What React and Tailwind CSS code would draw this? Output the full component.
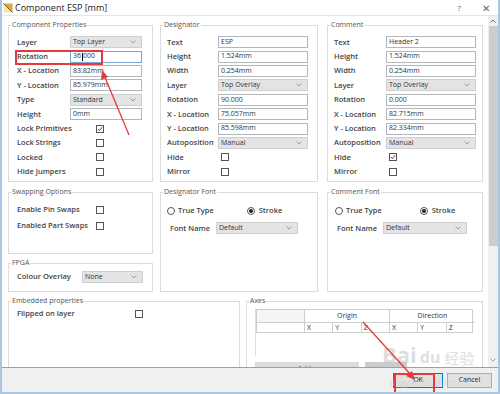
import React from "react";

const FONT = { fontFamily: '"Open Sans", "Noto Sans", "Liberation Sans", sans-serif' };

function Group({ title, className = "", children }) {
  return (
    <div className={`relative border border-[#dcdcdc] ${className}`}>
      <span className="absolute -top-[6px] left-[2px] bg-white px-[1px] text-[7px] leading-[10px] text-[#555]">
        {title}
      </span>
      {children}
    </div>
  );
}

function Chevron() {
  return (
    <svg width="6" height="4" viewBox="0 0 6 4" className="shrink-0">
      <polyline points="0.5,0.5 3,3 5.5,0.5" fill="none" stroke="#888" strokeWidth="0.8" />
    </svg>
  );
}

function TextBox({ value, w }) {
  return (
    <div className={`flex h-[12px] items-center border border-[#b4b6bc] bg-white pl-[2px] text-[7px] text-[#333] ${w}`}>
      {value}
    </div>
  );
}

function Select({ value, w }) {
  return (
    <div className={`flex h-[12px] items-center justify-between border border-[#cfcfcf] bg-[#e4e4e4] pl-[2px] pr-[5px] text-[7px] text-[#333] ${w}`}>
      <span>{value}</span>
      <Chevron />
    </div>
  );
}

function Check({ checked, ml }) {
  return (
    <div className={`flex h-[8px] w-[8px] items-center justify-center border border-[#555] bg-white ${ml}`}>
      {checked && (
        <svg width="6" height="6" viewBox="0 0 6 6">
          <polyline points="0.8,3 2.4,4.6 5.3,1.2" fill="none" stroke="#333" strokeWidth="0.9" />
        </svg>
      )}
    </div>
  );
}

function Radio({ on }) {
  return (
    <div className="flex h-[8px] w-[8px] items-center justify-center rounded-full border border-[#555] bg-white">
      {on && <div className="h-[4px] w-[4px] rounded-full bg-[#222]" />}
    </div>
  );
}

function Row({ label, lw, h = "h-[14.4px]", children }) {
  return (
    <div className={`flex items-center ${h}`}>
      <span className={`shrink-0 text-[7.5px] font-semibold text-[#444] ${lw}`}>{label}</span>
      {children}
    </div>
  );
}

function TextProps({ lw, tw, vals, hide }) {
  return (
    <>
      <Row label="Text" lw={lw}><TextBox value={vals[0]} w={tw} /></Row>
      <Row label="Height" lw={lw}><TextBox value={vals[1]} w={tw} /></Row>
      <Row label="Width" lw={lw}><TextBox value={vals[2]} w={tw} /></Row>
      <Row label="Layer" lw={lw}><Select value="Top Overlay" w={tw} /></Row>
      <Row label="Rotation" lw={lw}><TextBox value={vals[3]} w={tw} /></Row>
      <Row label="X - Location" lw={lw}><TextBox value={vals[4]} w={tw} /></Row>
      <Row label="Y - Location" lw={lw}><TextBox value={vals[5]} w={tw} /></Row>
      <Row label="Autoposition" lw={lw}><Select value="Manual" w={tw} /></Row>
      <Row label="Hide" lw={lw}><Check checked={hide} ml="ml-[3px]" /></Row>
      <Row label="Mirror" lw={lw}><Check ml="ml-[3px]" /></Row>
    </>
  );
}

function FontGroup({ title, className, trueX, strokeX, nameL, nameLw, sw }) {
  return (
    <Group title={title} className={className}>
      <div className={`flex h-[16px] items-center pt-[1px] mt-[9px] ${trueX}`}>
        <Radio />
        <span className="ml-[3px] text-[7.5px] font-semibold text-[#444]">True Type</span>
        <div className={`flex items-center ${strokeX}`}>
          <Radio on />
          <span className="ml-[4px] text-[7.5px] font-semibold text-[#444]">Stroke</span>
        </div>
      </div>
      <div className={`mt-[3px] ${nameL}`}>
        <Row label="Font Name" lw={nameLw}><Select value="Default" w={sw} /></Row>
      </div>
    </Group>
  );
}

export default function App() {
  return (
    <div style={FONT} className="relative flex h-[394px] w-[500px] flex-col overflow-hidden border-x-2 border-b-2 border-[#a9c6e3] bg-white">
      {/* title bar */}
      <div className="flex h-[16px] shrink-0 items-center border-b border-[#e6e6e6] bg-white pl-[1px]">
        <svg width="10" height="10" viewBox="0 0 10 10" className="shrink-0">
          <polygon points="0.5,0.5 9.5,0.5 9.5,9.5" fill="#d9a93a" />
          <polygon points="0.5,0.5 9.5,9.5 0.5,9.5" fill="#f3e6b8" />
          <line x1="0.5" y1="0.5" x2="9.5" y2="9.5" stroke="#7a5a1e" strokeWidth="1" />
        </svg>
        <span className="ml-[2px] text-[9px] text-[#222]">Component ESP [mm]</span>
        <span className="ml-auto text-[8px] text-[#666]">?</span>
        <span className="ml-[21px] mr-[8px] text-[10px] leading-none text-[#666]">✕</span>
      </div>

      {/* body */}
      <div className="flex min-h-0 flex-1">
        <div className="min-w-0 flex-1 overflow-hidden pl-[6px] pt-[9px]">
          {/* row 1 */}
          <div className="flex">
            <Group title={<>Component <u className="no-underline">P</u>roperties</>} className="h-[157px] w-[145px] pl-[8px] pt-[9px]">
              <Row label="Layer" lw="w-[53px]"><Select value="Top Layer" w="w-[72px]" /></Row>
              <Row label="Rotation" lw="w-[53px]">
                <div className="flex h-[12px] w-[72px] items-center border border-[#7aa7d6] bg-white pl-[2px] text-[7px] text-[#333]">
                  36<span className="mx-[0.5px] inline-block h-[8px] w-[1px] bg-black" />000
                </div>
              </Row>
              <Row label="X - Location" lw="w-[53px]"><TextBox value="83.82mm" w="w-[72px]" /></Row>
              <Row label="Y - Location" lw="w-[53px]"><TextBox value="85.979mm" w="w-[72px]" /></Row>
              <Row label="Type" lw="w-[53px]"><Select value="Standard" w="w-[72px]" /></Row>
              <Row label="Height" lw="w-[53px]"><TextBox value="0mm" w="w-[72px]" /></Row>
              <Row label="Lock Primitives" lw="w-[79px]"><Check checked /></Row>
              <Row label="Lock Strings" lw="w-[79px]"><Check /></Row>
              <Row label="Locked" lw="w-[79px]"><Check /></Row>
              <Row label="Hide Jumpers" lw="w-[79px]"><Check /></Row>
            </Group>

            <Group title="Designator" className="ml-[7px] h-[157px] w-[158px] pl-[6px] pt-[9px]">
              <TextProps lw="w-[51px]" tw="w-[90px]" vals={["ESP", "1.524mm", "0.254mm", "90.000", "75.057mm", "85.598mm"]} />
            </Group>

            <Group title="Comment" className="ml-[9px] h-[157px] w-[156px] pl-[6px] pt-[9px]">
              <TextProps lw="w-[52px]" tw="w-[90px]" vals={["Header 2", "1.524mm", "0.254mm", "0.000", "82.715mm", "82.334mm"]} hide />
            </Group>
          </div>

          {/* row 2 */}
          <div className="mt-[10px] flex">
            <div className="flex w-[145px] flex-col">
              <Group title="Swapping Options" className="h-[62px] pl-[8px] pt-[9px]">
                <Row label="Enable Pin Swaps" lw="w-[79px]" h="h-[16px]"><Check /></Row>
                <Row label="Enabled Part Swaps" lw="w-[79px]" h="h-[16px]"><Check /></Row>
              </Group>
              <Group title="FPGA" className="mt-[9px] h-[29px] pl-[8px] pt-[6px]">
                <Row label="Colour Overlay" lw="w-[65px]" h="h-[14px]"><Select value="None" w="w-[61px]" /></Row>
              </Group>
            </div>

            <FontGroup
              title="Designator Font"
              className="ml-[7px] h-[100px] w-[158px]"
              trueX="pl-[6px]"
              strokeX="ml-[33px]"
              nameL="pl-[9px]"
              nameLw="w-[46px]"
              sw="w-[82px]"
            />
            <FontGroup
              title="Comment Font"
              className="ml-[9px] h-[100px] w-[156px]"
              trueX="pl-[7px]"
              strokeX="ml-[38px]"
              nameL="pl-[9px]"
              nameLw="w-[46px]"
              sw="w-[84px]"
            />
          </div>

          {/* row 3 */}
          <div className="mt-[9px] flex">
            <Group title="Embedded properties" className="h-[80px] w-[232px] pl-[8px] pt-[5px]">
              <Row label="Flipped on layer" lw="w-[118px]" h="h-[14px]"><Check /></Row>
            </Group>
            <Group title="Axes" className="ml-[6px] h-[80px] w-[237px] pl-[8px] pt-[7px]">
              <div className="w-[218px] border-l border-[#dcdcdc]">
                <div className="grid grid-cols-[48px_85px_85px] border border-[#cfcfcf] text-[7px] text-[#333]">
                  <div className="h-[13px] border-r border-b border-[#cfcfcf] bg-[#f5f5f5]" />
                  <div className="flex h-[13px] items-center justify-center border-r border-b border-[#cfcfcf]">Origin</div>
                  <div className="flex h-[13px] items-center justify-center border-b border-[#cfcfcf]">Direction</div>
                  <div className="h-[9px] border-r border-[#cfcfcf]" />
                  <div className="grid grid-cols-3">
                    <div className="border-r border-[#cfcfcf] pl-[2px] leading-[9px]">X</div>
                    <div className="border-r border-[#cfcfcf] pl-[2px] leading-[9px]">Y</div>
                    <div className="border-r border-[#cfcfcf] pl-[2px] leading-[9px]">Z</div>
                  </div>
                  <div className="grid grid-cols-3">
                    <div className="border-r border-[#cfcfcf] pl-[2px] leading-[9px]">X</div>
                    <div className="border-r border-[#cfcfcf] pl-[2px] leading-[9px]">Y</div>
                    <div className="pl-[2px] leading-[9px]">Z</div>
                  </div>
                </div>
                <div className="h-[23px]" />
              </div>
              <div className="mt-[6px] flex gap-[6px]">
                <div className="flex h-[12px] w-[104px] items-end justify-center bg-[#dcdcdc] text-[7px] text-[#333]">Add...</div>
                <div className="h-[12px] w-[42px] bg-[#cccccc]" />
              </div>
            </Group>
          </div>
        </div>

        {/* scrollbar */}
        <div className="flex w-[10px] shrink-0 flex-col items-center bg-[#f0f0f0]">
          <div className="flex h-[10px] items-center">
            <svg width="6" height="4" viewBox="0 0 6 4">
              <polyline points="0.5,3.5 3,1 5.5,3.5" fill="none" stroke="#666" strokeWidth="0.9" />
            </svg>
          </div>
          <div className="h-[220px] w-[9px] bg-[#cdcdcd]" />
          <div className="mt-auto mb-[2px] flex h-[10px] items-center">
            <Chevron />
          </div>
        </div>
      </div>

      {/* bottom bar */}
      <div className="flex h-[25px] shrink-0 items-center justify-end gap-[4px] border-t border-[#a0a0a0] bg-[#f0f0f0] pr-[6px]">
        <div className="flex h-[15px] w-[50px] items-center justify-center border border-[#0078d7] bg-[#e1e1e1] text-[7px] text-[#222]">OK</div>
        <div className="flex h-[15px] w-[45px] items-center justify-center border border-[#adadad] bg-[#e1e1e1] text-[7px] text-[#222]">Cancel</div>
      </div>

      {/* watermark */}
      <div className="pointer-events-none absolute left-[380px] top-[343px] flex items-end text-[22px] font-bold leading-none text-[#c8c8c8]/60">
        <span>Bai</span>
        <span className="ml-[3px] text-[16px]">du</span>
        <span className="ml-[4px] text-[15px] font-normal" style={{ fontFamily: '"Noto Sans CJK SC", sans-serif' }}>经验</span>
      </div>
      <div className="pointer-events-none absolute left-[388px] top-[376px] text-[9px] text-[#c8c8c8]/60">jingyan.baidu.com</div>

      {/* red annotations */}
      <div className="pointer-events-none absolute left-[13px] top-[50px] h-[15px] w-[88px] border-2 border-[#e33b3b]" />
      <div className="pointer-events-none absolute left-[392px] top-[373px] h-[21px] w-[41px] border-2 border-[#e33b3b]" />
      <svg className="pointer-events-none absolute left-0 top-0" width="500" height="394">
        <line x1="127" y1="135" x2="102" y2="75" stroke="#e33b3b" strokeWidth="1.3" />
        <polygon points="100,70 99,80 106,77" fill="#e33b3b" />
        <line x1="361" y1="322" x2="410" y2="376" stroke="#e33b3b" strokeWidth="1.3" />
        <polygon points="413,380 404,376 410,371" fill="#e33b3b" />
      </svg>
    </div>
  );
}
